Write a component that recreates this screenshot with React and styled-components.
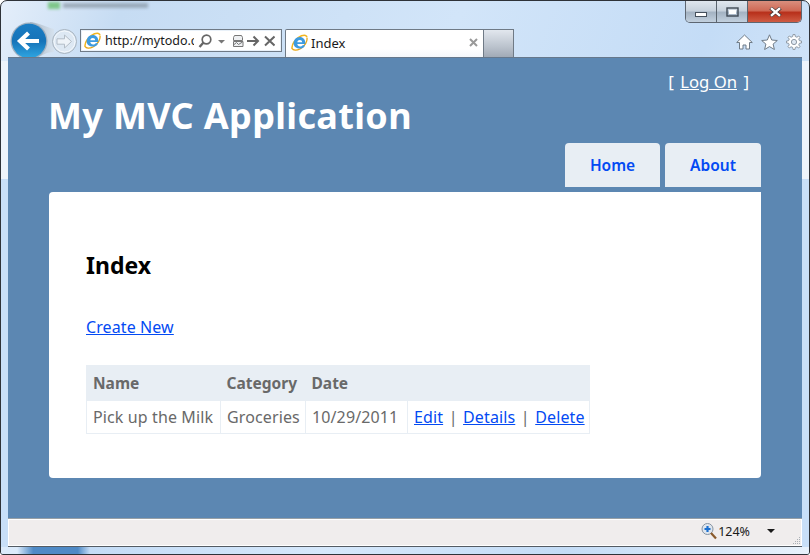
import React from "react";
import styled, { createGlobalStyle } from "styled-components";

const Global = createGlobalStyle`
  html, body { margin: 0; padding: 0; background: #fff; }
  body { width: 810px; height: 555px; overflow: hidden; font-family: "Noto Sans", sans-serif; }
`;

const Frame = styled.div`
  position: relative; width: 810px; height: 555px; box-sizing: border-box;
  display: flex; flex-direction: column; overflow: hidden;
  border: 1px solid #2e3238; border-radius: 7px 7px 3px 3px; padding: 0 7px 0 7px;
  background:
    linear-gradient(transparent 0 60px, #eef4fb 60px 178px, #c8dff8 178px 100%),
    linear-gradient(112deg, #e4eefa 0%, #c6dcf3 12%, #d2e5f9 45%, #c4dcf6 70%, #e2eefb 100%);
`;
const GhostTitle = styled.div`
  position: absolute; left: 47px; top: 1px; display: flex; gap: 3px; align-items: center; filter: blur(1.5px);
`;
const GhostDot = styled.span`width: 12px; height: 7px; background: #7fc78a;`;
const GhostBar = styled.span`width: 85px; height: 5px; background: #7c8894; opacity: .6;`;

const Caption = styled.div`
  position: absolute; right: 7px; top: 0; width: 117px; height: 22px; display: flex; box-sizing: border-box;
  border: 1px solid #5d6671; border-top: 0; border-radius: 0 0 5px 5px; overflow: hidden;
`;
const CaptionButton = styled.div`
  display: flex; align-items: center; justify-content: center; flex: ${p => p.$w}px 0 0; box-sizing: border-box;
  border-right: ${p => (p.$close ? "0" : "1px solid #59636e")};
  background: ${p => p.$close
    ? "linear-gradient(#d98f7e 0%, #cf6a56 45%, #b8301b 55%, #cf5c44 100%)"
    : "linear-gradient(#dfe6ee 0%, #c8d2dd 45%, #a4b3c3 55%, #c2d0de 100%)"};
`;
const MinGlyph = styled.span`
  width: 10px; height: 3px; margin-top: 6px; background: #fff; border: 1px solid #46505c;
`;

const Toolbar = styled.div`
  height: 56px; flex: none; display: flex; align-items: flex-end; position: relative;
`;
const NavGroup = styled.div`
  position: relative; width: 72px; height: 35px; flex: none; overflow: hidden; align-self: flex-end;
`;
const NavIcons = styled.svg`display: block; position: absolute; left: 0; top: 0;`;
const AddressBar = styled.div`
  width: 202px; height: 23px; box-sizing: border-box; margin-bottom: 5px; flex: none;
  display: flex; align-items: center; background: #fff; border: 1px solid #6f7a86;
  box-shadow: inset 0 0 0 1px #e9f1f9; padding-left: 3px; color: #1a1a1a;
`;
const Url = styled.span`
  font: 12.5px "Noto Sans", sans-serif; width: 89px; overflow: hidden; white-space: nowrap; margin: 0 3px 0 4px; flex: none;
`;
const TabStrip = styled.div`display: flex; margin-left: 3px; flex: none; align-self: flex-end;`;
const Tab = styled.div`
  width: 199px; height: 28px; box-sizing: border-box; display: flex; align-items: center; padding: 0 5px 2px 5px;
  background: linear-gradient(#fff 0%, #fff 70%, #f4f7fb 100%); border: 1px solid #6f7a86; border-bottom: 0; color: #1a1a1a;
  border-radius: 2px 0 0 0;
`;
const TabTitle = styled.span`font: 13px "Noto Sans", sans-serif; margin-left: 3px; flex: 1;`;
const NewTab = styled.div`
  width: 30px; height: 28px; box-sizing: border-box; border: 1px solid #6f7a86; border-left: 0; border-bottom: 0;
  background: linear-gradient(#e2e7ee 0%, #bcc4ce 60%, #a1aab6 100%);
`;
const ToolIcons = styled.div`
  margin-left: auto; margin-bottom: 7px; display: flex; align-items: center; gap: 8px;
`;

const Page = styled.div`
  flex: none; height: 461px; box-sizing: border-box; background: #5c87b2; border-top: 1px solid #66788c;
  padding: 0 41px 40px 41px; display: flex; flex-direction: column; width: 794px;
`;
const Header = styled.header`
  height: 134px; flex: none; display: flex; flex-direction: column; position: relative;
`;
const LogOnLine = styled.div`
  align-self: flex-end; margin: 12px 12px 0 0; color: #fff; font-size: 17px; line-height: 24px; height: 24px; word-spacing: 2px;
`;
const LogOnLink = styled.a`color: #fff; text-decoration: underline; word-spacing: 0; font-size: 16.7px;`;
const Title = styled.h1`
  margin: -3px 0 0 -1px; color: #fff; font-size: 36px; line-height: 50px; font-weight: 700; letter-spacing: .35px;
`;
const Menu = styled.nav`
  display: flex; justify-content: flex-end; gap: 5px; margin-top: auto; margin-bottom: 5px;
`;
const MenuItem = styled.a`
  width: ${p => p.$w}px; height: 44px; display: flex; align-items: center; justify-content: center;
  background: #e8eef4; color: #034af3; font-size: 15.5px; font-weight: 600; border-radius: 4px 4px 0 0;
`;
const Main = styled.main`
  flex: 1; background: #fff; border-radius: 4px 0 4px 4px; padding: 57px 37px 0;
`;
const Heading = styled.h2`
  margin: 0; color: #000; font-size: 23px; line-height: 32px; font-weight: 700;
`;
const CreateLine = styled.p`margin: 34px 0 0; font-size: 16px; line-height: 24px; letter-spacing: .1px;`;
const Link = styled.a`color: #034af3; text-decoration: underline;`;
const Table = styled.table`
  border-collapse: collapse; margin-top: 26px; border: 1px solid #e8eef4; color: #696969; table-layout: fixed; width: 503px;
`;
const Th = styled.th`
  background: #e8eef4; height: 35px; padding: 0 0 0 6px; text-align: left; font-size: 15.5px; font-weight: 700; width: ${p => p.$w}px; box-sizing: border-box;
`;
const Td = styled.td`
  height: 33px; padding: 0 0 0 6px; border: 1px solid #e8eef4; font-size: 16px; letter-spacing: .12px; white-space: nowrap; box-sizing: border-box;
`;
const Sep = styled.span`margin: 0 5.5px;`;

const StatusBar = styled.footer`
  height: 29px; width: 794px; flex: none; box-sizing: border-box; background: #f0eded; border-top: 1px solid #98a0a6;
  border-bottom: 1px solid #545b63; box-shadow: inset 0 0 0 1px #fff; display: flex; align-items: center; justify-content: flex-end;
  color: #1a1a1a; position: relative; padding: 0 27px 3px 0;
`;
const Zoom = styled.span`font: 12.5px "Noto Sans", sans-serif; margin: 0 17px 0 1px;`;
const Caret = styled.span`width: 0; height: 0; border: 4px solid transparent; border-top: 4px solid #1a1a1a; border-bottom: 0;`;
const Grip = styled.svg`position: absolute; right: 1px; bottom: 1px;`;
const BottomGlow = styled.div`
  flex: 1; margin: 0 -7px; background: linear-gradient(90deg, #dcebfb 0, #dcebfb 2%, #4f8ac6 4%, #4f8ac6 9.5%, #c4dcf6 11%, #d6e8fb 40%, #c4dcf6 70%, #e8f2fc 100%);
`;

const IeIcon = () => (
  <svg width="17" height="17" viewBox="0 0 17 17" style={{ flex: "none" }}>
    <path d="M1.200 15C0 11 4.500 4 10.500 1.800c3-1 5.500-.6 5.500 1.800" fill="none" stroke="#f3b61f" strokeWidth="1.500" />
    <path d="M16 4c.500 3-2 8.500-7 11-3.500 1.700-7 1.500-7.800-.5" fill="none" stroke="#e8a614" strokeWidth="1.300" />
    <path d="M2.600 9.500C2.600 5.800 5.300 3 8.800 3c3.300 0 5.500 2.400 5.500 6v1.100H6.300c.2 1.500 1.200 2.400 2.800 2.400 1.100 0 2-.4 2.500-1.300h2.500c-.8 2.200-2.700 3.400-5 3.400-3.600 0-6.500-2-6.500-5.100zm3.700-1.300h4.900C11 6.900 10.200 6 8.800 6 7.400 6 6.500 6.900 6.300 8.200z" fill="#3d9be0" fillRule="evenodd" />
  </svg>
);

const Glyph = ({ w = 14, h = 14, children }) => (
  <svg width={w} height={h} viewBox={`0 0 ${w} ${h}`} style={{ flex: "none" }}>{children}</svg>
);

const gearPath = (() => {
  const pts = [];
  const teeth = 8;
  for (let i = 0; i < teeth; i++) {
    const a = (i / teeth) * Math.PI * 2;
    const s = (Math.PI * 2) / teeth;
    [[-0.30, 5.6], [-0.16, 7.6], [0.16, 7.6], [0.30, 5.6]].forEach(([f, r]) => {
      pts.push(`${(8 + r * Math.cos(a + f * s)).toFixed(2)} ${(8 + r * Math.sin(a + f * s)).toFixed(2)}`);
    });
  }
  return `M${pts.join("L")}Z`;
})();

export default function App() {
  return (
    <>
      <Global />
      <Frame>
        <GhostTitle><GhostDot /><GhostBar /></GhostTitle>
        <Caption>
          <CaptionButton $w={31}><MinGlyph /></CaptionButton>
          <CaptionButton $w={31}>
            <Glyph w={13} h={10}><rect x="1" y="1" width="11" height="8" fill="none" stroke="#3f4954" strokeWidth="1.400" /><rect x="3" y="3" width="7" height="4" fill="#fff" /></Glyph>
          </CaptionButton>
          <CaptionButton $w={55} $close>
            <Glyph w={13} h={10}><path d="M1.500 1 11.500 9M11.500 1 1.500 9" stroke="#4a3a3a" strokeWidth="3.800" /><path d="M2 1.200 11 8.800M11 1.200 2 8.800" stroke="#fff" strokeWidth="2.400" /></Glyph>
          </CaptionButton>
        </Caption>
        <Toolbar>
          <NavGroup>
            <NavIcons width="72" height="35" viewBox="0 0 72 35">
              <defs>
                <linearGradient id="bk" x1="0" y1="0" x2="0" y2="1">
                  <stop offset="0" stopColor="#1a7dc4" /><stop offset=".5" stopColor="#1673b8" /><stop offset="1" stopColor="#2fa6e2" />
                </linearGradient>
                <linearGradient id="sw" x1="0" y1="0" x2="1" y2="0">
                  <stop offset="0" stopColor="#aab8c6" /><stop offset="1" stopColor="#d6e2ee" />
                </linearGradient>
              </defs>
              <path d="M22 0 C32 1 38 5 46 7 L46 30 C38 30 36 33 30 35 Z" fill="url(#sw)" />
              <circle cx="21" cy="19" r="18.500" fill="#9fb0c0" />
              <circle cx="21" cy="19" r="17.200" fill="url(#bk)" />
              <path d="M12 19h19M20.500 11 12 19l8.500 8" fill="none" stroke="#fff" strokeWidth="4.200" />
              <circle cx="56.500" cy="19.500" r="12" fill="#dde8f3" stroke="#a7b3bf" />
              <circle cx="56.500" cy="19.500" r="10.500" fill="none" stroke="#f4f8fc" />
              <path d="M49 16.800h7.500V13l7 6.500-7 6.500v-3.800H49z" fill="#eef3f8" stroke="#b3bdc7" />
            </NavIcons>
          </NavGroup>
          <AddressBar>
            <IeIcon />
            <Url>http://mytodo.c</Url>
            <Glyph w={16} h={16}><circle cx="9.500" cy="6.500" r="4.300" fill="none" stroke="#666" strokeWidth="1.700" /><path d="M6.500 9.500 2.500 14" stroke="#666" strokeWidth="2.400" /></Glyph>
            <Glyph w={15} h={16}><path d="M5 7h7l-3.500 3.500z" fill="#777" /></Glyph>
            <Glyph w={17} h={16}><path d="M6.500 2.500h7l1 2v3h-9v-3z" fill="#eef0f2" stroke="#777" /><path d="M5.500 8.500h9.500v5H5.500z" fill="#eef0f2" stroke="#777" /><path d="M5.500 12l3-2.500 2 2 4-2.500" fill="none" stroke="#777" /></Glyph>
            <Glyph w={15} h={16}><path d="M2 8h11M8.500 3.500 13 8 8.500 12.500" fill="none" stroke="#666" strokeWidth="2" /></Glyph>
            <Glyph w={15} h={16}><path d="M5 3.500 14.500 12.500M14.500 3.500 5 12.500" fill="none" stroke="#666" strokeWidth="2" /></Glyph>
          </AddressBar>
          <TabStrip>
            <Tab>
              <IeIcon />
              <TabTitle>Index</TabTitle>
              <Glyph w={9} h={9}><path d="M1 1 8 8M8 1 1 8" stroke="#999" strokeWidth="2" /></Glyph>
            </Tab>
            <NewTab />
          </TabStrip>
          <ToolIcons>
            <Glyph w={17} h={16}><path d="M8.500 1 16.300 8.500h-2.800V15h-3.500v-4H7v4H3.500V8.500H.7z" fill="#fff" stroke="#6f7b87" /></Glyph>
            <Glyph w={17} h={16}><path d="M8.500 .8 10.700 6l5.600.5-4.200 3.600 1.300 5.400-4.900-2.900-4.900 2.900 1.300-5.400L.7 6.500 6.300 6z" fill="#fff" stroke="#6f7b87" /></Glyph>
            <Glyph w={16} h={16}>
              <path d={gearPath} fill="#fff" stroke="#8d98a3" />
              <circle cx="8" cy="8" r="2.600" fill="#dfe9f4" stroke="#8d98a3" />
            </Glyph>
          </ToolIcons>
        </Toolbar>
        <Page>
          <Header>
            <LogOnLine>[ <LogOnLink>Log On</LogOnLink> ]</LogOnLine>
            <Title>My MVC Application</Title>
            <Menu>
              <MenuItem $w={95}>Home</MenuItem>
              <MenuItem $w={96}>About</MenuItem>
            </Menu>
          </Header>
          <Main>
            <Heading>Index</Heading>
            <CreateLine><Link>Create New</Link></CreateLine>
            <Table>
              <thead>
                <tr>
                  <Th $w={134}>Name</Th>
                  <Th $w={85}>Category</Th>
                  <Th $w={102}>Date</Th>
                  <Th $w={182} />
                </tr>
              </thead>
              <tbody>
                <tr>
                  <Td>Pick up the Milk</Td>
                  <Td>Groceries</Td>
                  <Td>10/29/2011</Td>
                  <Td><Link>Edit</Link><Sep>|</Sep><Link>Details</Link><Sep>|</Sep><Link>Delete</Link></Td>
                </tr>
              </tbody>
            </Table>
          </Main>
        </Page>
        <StatusBar>
          <Glyph w={16} h={17}><circle cx="6.500" cy="6" r="5.500" fill="#dfe6ee" stroke="#8794a2" /><path d="M3.500 6h6M6.500 3v6" stroke="#1b6fd0" strokeWidth="2.200" /><path d="M10 10l5 5.500" stroke="#8a5a2c" strokeWidth="2.200" /></Glyph>
          <Zoom>124%</Zoom>
          <Caret />
          <Grip width="9" height="9" viewBox="0 0 9 9"><path d="M7 1h1v1H7zM5 3h1v1H5zM7 3h1v1H7zM3 5h1v1H3zM5 5h1v1H5zM7 5h1v1H7zM1 7h1v1H1zM3 7h1v1H3zM5 7h1v1H5zM7 7h1v1H7z" fill="#aab0b6" /></Grip>
        </StatusBar>
        <BottomGlow />
      </Frame>
    </>
  );
}
